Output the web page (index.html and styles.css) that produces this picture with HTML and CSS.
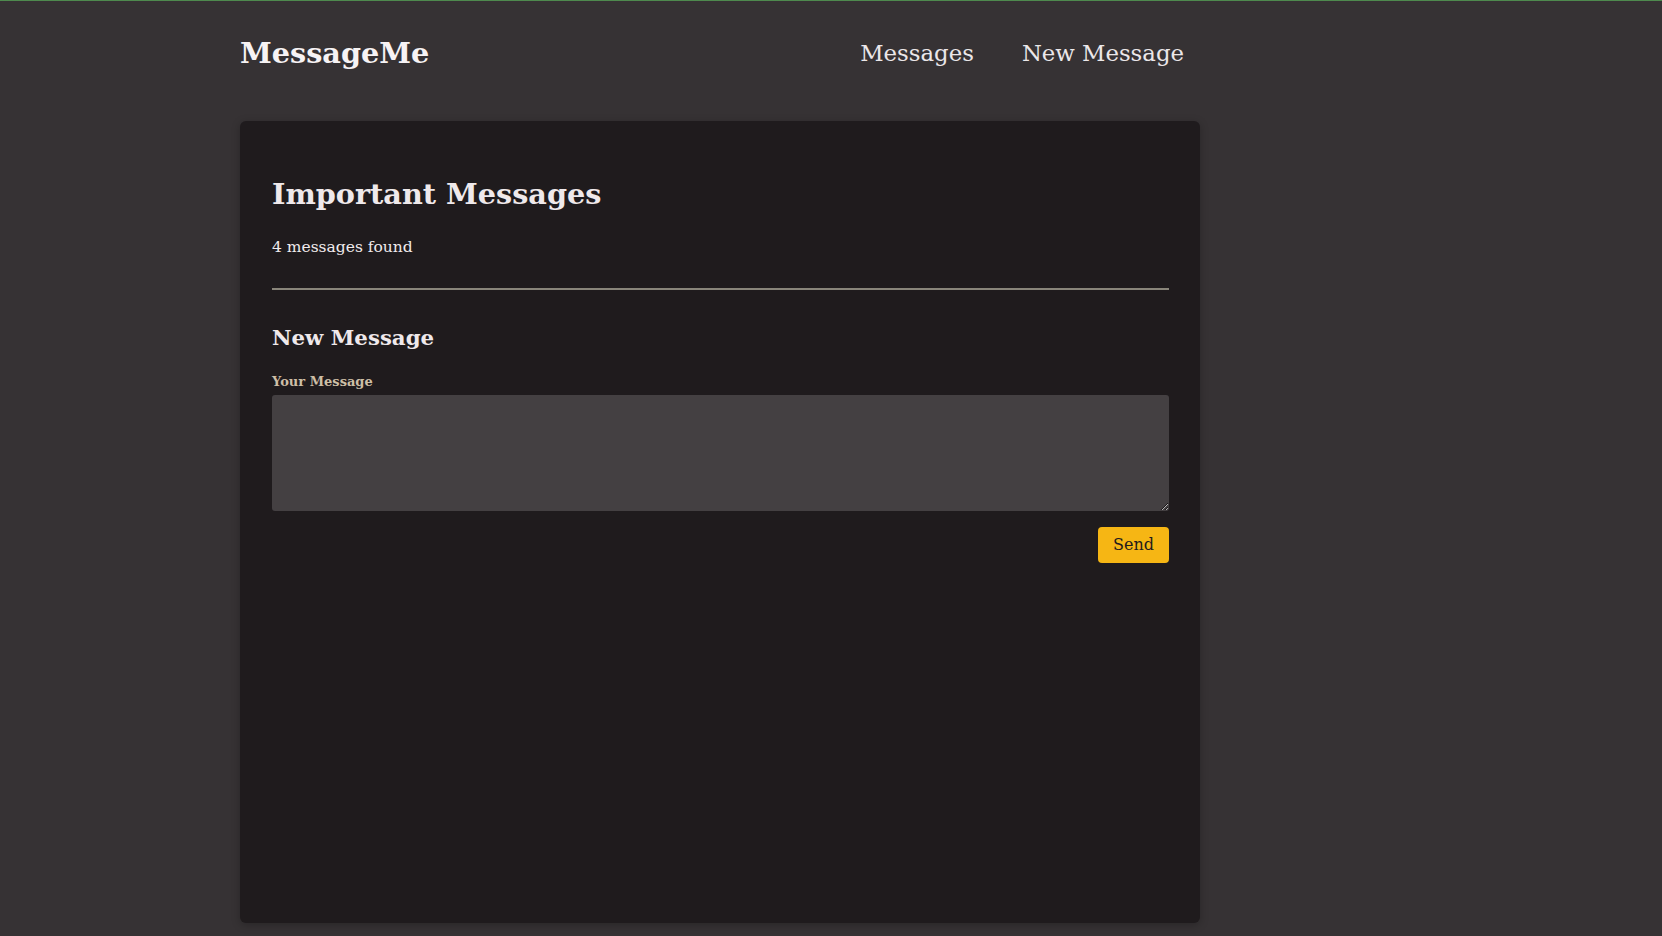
FILE: index.html
```html
<!DOCTYPE html>
<html lang="en">
<head>
<meta charset="utf-8">
<title>MessageMe</title>
<link rel="stylesheet" href="styles.css">
</head>
<body>
<div class="page">
  <header class="site-header">
    <div class="logo">MessageMe</div>
    <nav class="nav">
      <a href="#" class="nav-link">Messages</a>
      <a href="#" class="nav-link">New Message</a>
    </nav>
  </header>
  <main class="card">
    <h1 class="title">Important Messages</h1>
    <p class="count">4 messages found</p>
    <hr class="divider">
    <h2 class="subtitle">New Message</h2>
    <form class="form">
      <label class="label" for="msg">Your Message</label>
      <textarea id="msg" class="textarea"></textarea>
      <div class="actions">
        <button type="button" class="btn">Send</button>
      </div>
    </form>
  </main>
</div>
</body>
</html>
```
FILE: styles.css
```css
html, body {
  margin: 0;
  padding: 0;
}
body {
  background: #363234;
  border-top: 1px solid #4e8a4e;
  font-family: "DejaVu Serif", "Liberation Serif", serif;
  color: #efe9eb;
  min-height: 935px;
}
.page {
  width: 960px;
  margin-left: 240px;
}
.site-header {
  height: 104px;
  display: flex;
  align-items: center;
  justify-content: space-between;
  padding-right: 16px;
}
.logo {
  font-size: 28.7px;
  font-weight: bold;
  color: #f7f3f4;
}
.nav {
  display: flex;
  gap: 48px;
}
.nav-link {
  color: #ebe7e9;
  text-decoration: none;
  font-size: 22.8px;
}
.card {
  margin-top: 16px;
  background: #1f1b1d;
  border-radius: 6px;
  box-shadow: 0 2px 8px rgba(0,0,0,0.25);
  padding: 56px 31px 32px 32px;
  min-height: 714px;
}
.title {
  margin: 0;
  font-size: 28.7px;
  font-weight: bold;
  color: #efe9eb;
}
.count {
  margin: 26.5px 0 0;
  font-size: 15.5px;
  color: #f1ebed;
}
.divider {
  margin: 32px 0 0;
  border: 0;
  height: 2px;
  background: #89857a;
}
.subtitle {
  margin: 35px 0 0;
  font-size: 21.3px;
  font-weight: bold;
  color: #efe9eb;
}
.form {
  display: flex;
  flex-direction: column;
}
.label {
  margin-top: 24px;
  font-size: 13px;
  font-weight: bold;
  color: #cdbfa6;
}
.textarea {
  margin-top: 6px;
  height: 116px;
  box-sizing: border-box;
  background: #444042;
  border: 0;
  border-radius: 3px;
  color: #efe9eb;
  font-family: inherit;
  resize: vertical;
}
.actions {
  display: flex;
  justify-content: flex-end;
  margin-top: 16px;
}
.btn {
  width: 71px;
  height: 36px;
  background: #f6b614;
  border: 0;
  border-radius: 4px;
  font-family: inherit;
  font-size: 16px;
  color: #1f1b1d;
}
```
